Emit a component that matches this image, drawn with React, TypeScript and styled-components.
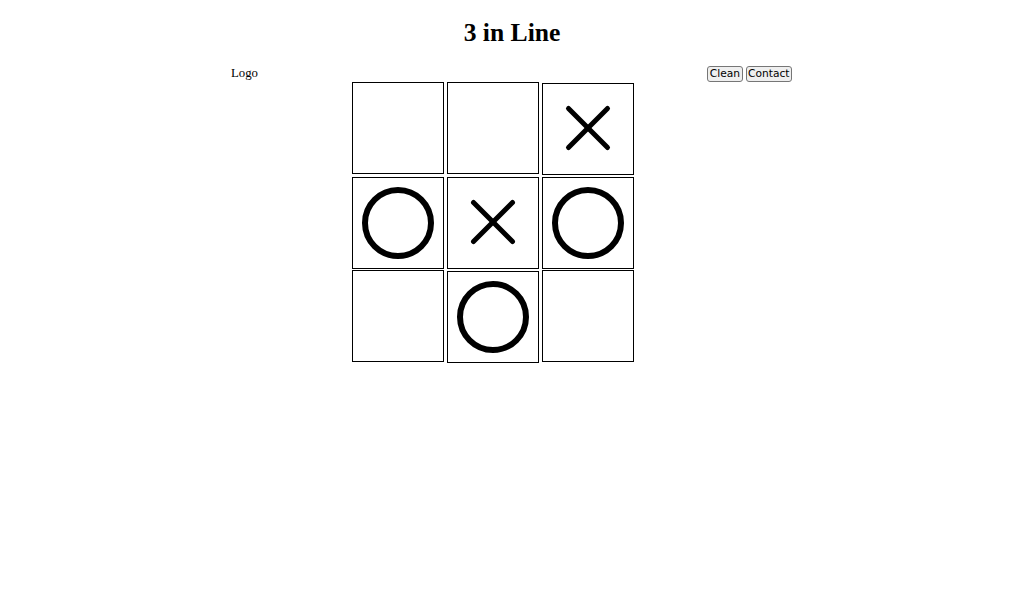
import React from "react";
import styled, { createGlobalStyle } from "styled-components";

type Mark = "X" | "O" | "";

const board: Mark[][] = [
  ["", "", "X"],
  ["O", "X", "O"],
  ["", "O", ""],
];

const GlobalStyle = createGlobalStyle`
  html, body {
    margin: 0;
    padding: 0;
    background: #fff;
  }
  body {
    font-family: "Liberation Serif", "Times New Roman", serif;
    color: #000;
  }
`;

const Title = styled.h1`
  margin: 18px 0 0;
  font-size: 25.6px;
  line-height: 30px;
  font-weight: bold;
  text-align: center;
`;

const Main = styled.main`
  width: 562px;
  margin: 0 auto;
`;

const Toolbar = styled.div`
  display: flex;
  justify-content: space-between;
  align-items: baseline;
  margin-top: 18px;
`;

const Logo = styled.span`
  font-size: 12.8px;
`;

const Actions = styled.div`
  display: flex;
  gap: 3px;
  margin-right: 1px;
`;

const Button = styled.button`
  font-family: "DejaVu Sans", Verdana, sans-serif;
  font-size: 10.67px;
  line-height: 12px;
  padding: 1px 1.5px;
  color: #000;
  background: #efefef;
  border: 1px solid #767676;
  border-radius: 3px;
  cursor: pointer;
`;

const Board = styled.div`
  display: flex;
  flex-direction: column;
  gap: 1px;
  margin-left: 121px;
`;

const Row = styled.div`
  display: flex;
  align-items: flex-start;
  gap: 3px;
`;

const Cell = styled.div<{ $filled: boolean }>`
  box-sizing: border-box;
  width: 92px;
  height: 92px;
  margin-top: ${(p) => (p.$filled ? "1px" : "0")};
  border: 1px solid #000;
  background: #fff;

  svg {
    display: block;
    width: 100%;
    height: 100%;
  }
`;

function Cross() {
  return (
    <svg viewBox="0 0 90 90">
      <g stroke="#000" strokeWidth="5" strokeLinecap="round">
        <line x1="25.5" y1="24.5" x2="64.5" y2="63.5" />
        <line x1="64.5" y1="24.5" x2="25.5" y2="63.5" />
      </g>
    </svg>
  );
}

function Circle() {
  return (
    <svg viewBox="0 0 90 90">
      <circle cx="45" cy="45" r="33" fill="none" stroke="#000" strokeWidth="6" />
    </svg>
  );
}

export default function App() {
  return (
    <>
      <GlobalStyle />
      <Title>3 in Line</Title>
      <Main>
        <Toolbar>
          <Logo>Logo</Logo>
          <Actions>
            <Button>Clean</Button>
            <Button>Contact</Button>
          </Actions>
        </Toolbar>
        <Board>
          {board.map((row, r) => (
            <Row key={r}>
              {row.map((mark, c) => (
                <Cell key={c} $filled={mark !== ""}>
                  {mark === "X" && <Cross />}
                  {mark === "O" && <Circle />}
                </Cell>
              ))}
            </Row>
          ))}
        </Board>
      </Main>
    </>
  );
}
